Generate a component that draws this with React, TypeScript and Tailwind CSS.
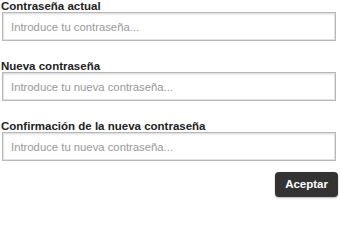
import React from 'react';

const fields = [
    { label: 'Contraseña actual', placeholder: 'Introduce tu contraseña...' },
    { label: 'Nueva contraseña', placeholder: 'Introduce tu nueva contraseña...' },
    { label: 'Confirmación de la nueva contraseña', placeholder: 'Introduce tu nueva contraseña...' },
];

const App: React.FC = () => {
    return (
        <div className="w-[340px] h-[201px] bg-white font-['Liberation_Sans',Arial,sans-serif] overflow-hidden">
            <form className="flex flex-col" onSubmit={e => e.preventDefault()}>
                {fields.map(f => (
                    <div key={f.label} className="flex flex-col mb-[19px]">
                        <label className="text-[11.5px] leading-[12px] font-bold text-[#222] pl-px">{f.label}</label>
                        <input
                            type="password"
                            placeholder={f.placeholder}
                            className="ml-[2px] w-[334px] h-[29px] px-[8px] text-[11.3px] text-[#555] bg-white border border-[#b8b8b8] shadow-[inset_0_0_0_1px_#e2e2e2,inset_0_2px_2px_rgba(0,0,0,0.08)] outline-none placeholder:text-[#999]"
                        />
                    </div>
                ))}
                <div className="flex justify-end -mt-[8px] pr-[2px]">
                    <button
                        type="submit"
                        className="h-[25px] px-[10px] rounded-[4px] bg-[#333] text-white text-[11.5px] font-bold shadow-[0_1px_2px_rgba(0,0,0,0.3)]"
                    >
                        Aceptar
                    </button>
                </div>
            </form>
        </div>
    );
};

export default App;
